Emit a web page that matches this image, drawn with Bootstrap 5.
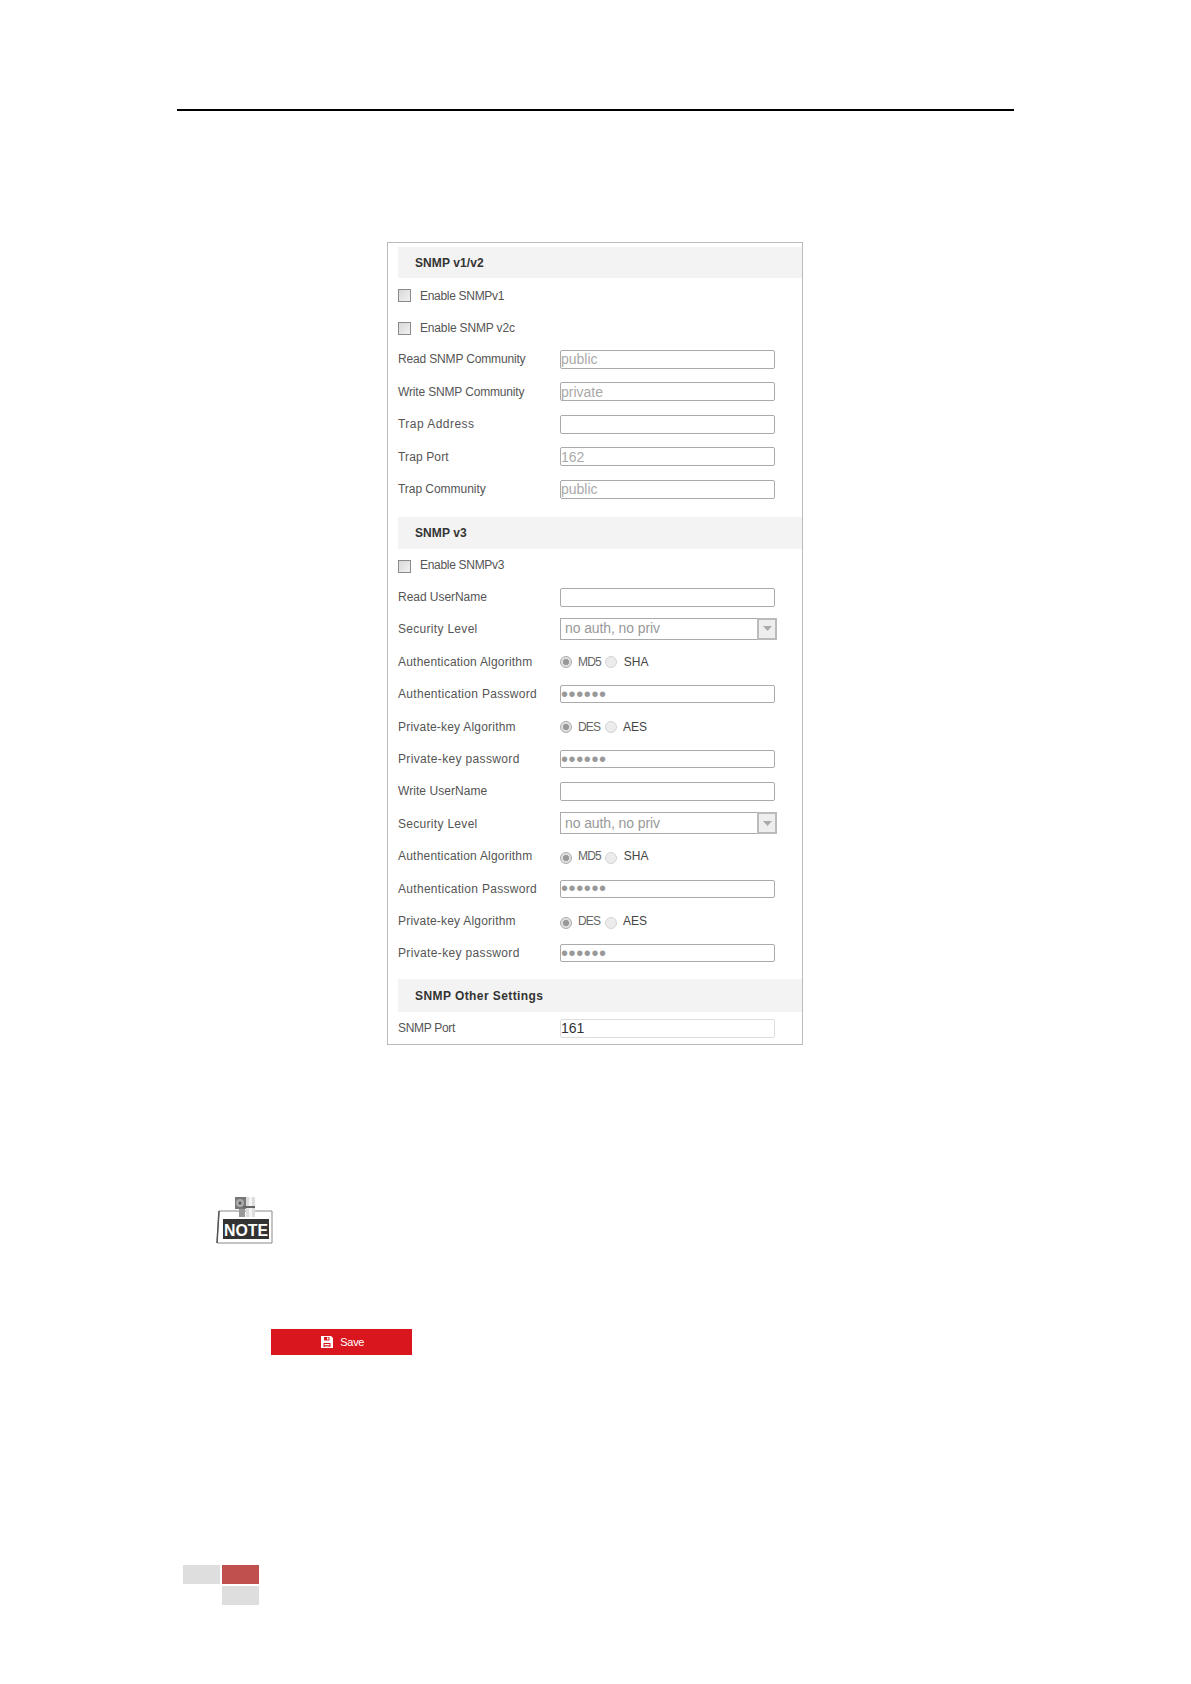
<!DOCTYPE html>
<html lang="en">
<head>
<meta charset="utf-8">
<title>SNMP Settings</title>
<link href="https://cdn.jsdelivr.net/npm/bootstrap@5.3.0/dist/css/bootstrap.min.css" rel="stylesheet">
<style>
body{background:#fff;font-family:"Liberation Sans",Arial,sans-serif;color:#555}
.sheet{width:1191px;height:1684px;padding-top:109px;overflow:hidden}
.top-rule{width:837px;height:2px;margin-left:177px;background:#000}
.snmp-panel{width:416px;height:803px;margin:131px 0 0 387px;padding:4px 0 0 10px;border:1px solid #bbb}
.sec-head{height:32px;padding-left:17px;background:#f3f3f3;color:#333;font-size:12px;font-weight:700;line-height:33px}
.sec-first{height:31px;letter-spacing:.1px}
.sec-mid{margin-top:11px;letter-spacing:.1px}
.sec-last{margin-top:9.500px;height:33px;line-height:34px;letter-spacing:.42px}
.cfg-row{height:32.400px;font-size:12px;color:#555}
.cfg-top .cfg-row{height:32.500px}
.cfg-top .cfg-enable{padding-top:3px}
.sp-a{letter-spacing:-.3px}
.sp-b{letter-spacing:-.16px}
.sp-c{letter-spacing:-.04px}
.sp-d{letter-spacing:.05px}
.sp-e{letter-spacing:.13px}
.sp-f{letter-spacing:.21px}
.sp-g{letter-spacing:.3px}
.sp-h{letter-spacing:.35px}
.sp-i{letter-spacing:.46px}
.cfg-label{width:162px;flex:none}
.cfg-input.form-control{width:215px;height:19px;min-height:0;padding:0;border:1px solid #aaa;border-radius:2px;font-size:14px;line-height:16px;letter-spacing:0;color:#333;box-shadow:none;background:#fff}
.cfg-input.form-control::placeholder{color:#aaa;opacity:1}
.cfg-input.cfg-pass{height:18px;font-size:20px;letter-spacing:.6px;color:#999;padding-left:0}
.cfg-input.cfg-soft{border-color:#ddd}
.cfg-select{width:217px;height:22px;margin-bottom:1px;border:1px solid #aaa;border-right:0;font-size:14px;letter-spacing:-.1px;color:#999;padding-left:4px}
.cfg-arrow{width:20px;height:22px;margin-left:auto;background:#eee;border:2px solid #bbb}
.cfg-check.form-check-input{width:13px;height:13px;margin:0 9px 0 0;border:1px solid #8a8a8a;border-radius:0;background:linear-gradient(135deg,#d8d8d8,#f1f1f1);flex:none}
.cfg-drop{transform:translateY(2px)}
.cfg-radio.form-check-input{width:12px;height:12px;margin:0;border:1px solid #d4d4d4;background:#ececec;flex:none}
.cfg-radio.form-check-input:checked{border-color:#aaa;background:radial-gradient(circle,#999 0,#999 2.800px,#e0e0e0 3.400px)}
.rad-one{margin-left:6px;letter-spacing:-.8px;color:#666}
.cfg-radio.form-check-input.rad-two{margin-left:4.300px}
.rad-three{margin-left:6.500px;letter-spacing:0;color:#444}
.note-art{margin:152px 0 0 216px;width:57px;height:47px;display:block}
.save-btn.btn{width:141px;height:26px;margin:85px 0 0 271px;padding:0 0 0 2px;border:0;border-radius:0;background:#d9161e;color:#fff;font-size:11px;letter-spacing:-.3px;font-weight:400;gap:7.500px}
.foot-blocks{display:grid;grid-template-columns:37px 37px;grid-template-rows:19px 19px;gap:2px;margin:210px 0 0 183px;width:76px}
.blk-grey{background:#dedede}
.blk-red{background:#c0504d}
</style>
</head>
<body>
<main class="sheet">
  <div class="top-rule"></div>

  <section class="snmp-panel">
    <div class="cfg-top">
      <div class="sec-head sec-first">SNMP v1/v2</div>
      <div class="cfg-row cfg-enable d-flex align-items-center"><input class="form-check-input cfg-check" type="checkbox" id="c1"><label class="sp-a" for="c1">Enable SNMPv1</label></div>
      <div class="cfg-row cfg-enable d-flex align-items-center"><input class="form-check-input cfg-check" type="checkbox" id="c2"><label class="sp-b" for="c2">Enable SNMP v2c</label></div>
      <div class="cfg-row d-flex align-items-center"><span class="cfg-label sp-b">Read SNMP Community</span><input class="form-control cfg-input" placeholder="public"></div>
      <div class="cfg-row d-flex align-items-center"><span class="cfg-label sp-b">Write SNMP Community</span><input class="form-control cfg-input" placeholder="private"></div>
      <div class="cfg-row d-flex align-items-center"><span class="cfg-label sp-i">Trap Address</span><input class="form-control cfg-input"></div>
      <div class="cfg-row d-flex align-items-center"><span class="cfg-label sp-e">Trap Port</span><input class="form-control cfg-input" placeholder="162"></div>
      <div class="cfg-row d-flex align-items-center"><span class="cfg-label sp-c">Trap Community</span><input class="form-control cfg-input" placeholder="public"></div>
    </div>

    <div class="sec-head sec-mid">SNMP v3</div>
    <div class="cfg-row d-flex align-items-center"><input class="form-check-input cfg-check cfg-drop" type="checkbox" id="c3"><label class="sp-a" for="c3">Enable SNMPv3</label></div>
    <div class="cfg-row d-flex align-items-center"><span class="cfg-label sp-c">Read UserName</span><input class="form-control cfg-input"></div>
    <div class="cfg-row d-flex align-items-center"><span class="cfg-label sp-g">Security Level</span>
      <div class="cfg-select d-flex align-items-center"><span>no auth, no priv</span><span class="cfg-arrow d-flex align-items-center justify-content-center"><svg width="9" height="5" viewBox="0 0 9 5"><path d="M0 0h9L4.500 5z" fill="#aaa"/></svg></span></div></div>
    <div class="cfg-row d-flex align-items-center"><span class="cfg-label sp-f">Authentication Algorithm</span>
      <div class="d-flex align-items-center"><input class="form-check-input cfg-radio" type="radio" name="a1" checked><span class="rad-one">MD5</span><input class="form-check-input cfg-radio rad-two" type="radio" name="a1"><span class="rad-three">SHA</span></div></div>
    <div class="cfg-row d-flex align-items-center"><span class="cfg-label sp-g">Authentication Password</span><input class="form-control cfg-input cfg-pass" type="password" value="123456"></div>
    <div class="cfg-row d-flex align-items-center"><span class="cfg-label sp-f">Private-key Algorithm</span>
      <div class="d-flex align-items-center"><input class="form-check-input cfg-radio" type="radio" name="p1" checked><span class="rad-one">DES</span><input class="form-check-input cfg-radio rad-two" type="radio" name="p1"><span class="rad-three">AES</span></div></div>
    <div class="cfg-row d-flex align-items-center"><span class="cfg-label sp-h">Private-key password</span><input class="form-control cfg-input cfg-pass" type="password" value="123456"></div>
    <div class="cfg-row d-flex align-items-center"><span class="cfg-label sp-d">Write UserName</span><input class="form-control cfg-input"></div>
    <div class="cfg-row d-flex align-items-center"><span class="cfg-label sp-g">Security Level</span>
      <div class="cfg-select d-flex align-items-center"><span>no auth, no priv</span><span class="cfg-arrow d-flex align-items-center justify-content-center"><svg width="9" height="5" viewBox="0 0 9 5"><path d="M0 0h9L4.500 5z" fill="#aaa"/></svg></span></div></div>
    <div class="cfg-row d-flex align-items-center"><span class="cfg-label sp-f">Authentication Algorithm</span>
      <div class="d-flex align-items-center"><input class="form-check-input cfg-radio cfg-drop" type="radio" name="a2" checked><span class="rad-one">MD5</span><input class="form-check-input cfg-radio rad-two cfg-drop" type="radio" name="a2"><span class="rad-three">SHA</span></div></div>
    <div class="cfg-row d-flex align-items-center"><span class="cfg-label sp-g">Authentication Password</span><input class="form-control cfg-input cfg-pass" type="password" value="123456"></div>
    <div class="cfg-row d-flex align-items-center"><span class="cfg-label sp-f">Private-key Algorithm</span>
      <div class="d-flex align-items-center"><input class="form-check-input cfg-radio cfg-drop" type="radio" name="p2" checked><span class="rad-one">DES</span><input class="form-check-input cfg-radio rad-two cfg-drop" type="radio" name="p2"><span class="rad-three">AES</span></div></div>
    <div class="cfg-row d-flex align-items-center"><span class="cfg-label sp-h">Private-key password</span><input class="form-control cfg-input cfg-pass" type="password" value="123456"></div>

    <div class="sec-head sec-last">SNMP Other Settings</div>
    <div class="cfg-row d-flex align-items-center"><span class="cfg-label sp-a">SNMP Port</span><input class="form-control cfg-input cfg-soft" value="161"></div>
  </section>

  <svg class="note-art" viewBox="0 0 57 47" role="img" aria-label="Note">
    <path d="M3 14H56V46H1z" fill="#fff" stroke="#8a8a8a" stroke-width="1"/>
    <path d="M1 46 3 14" stroke="#555" stroke-width="1.500"/>
    <rect x="7" y="22" width="46" height="20" fill="#333"/>
    <rect x="19" y="0" width="11" height="12" fill="#777"/>
    <circle cx="24" cy="6" r="4" fill="#aaa"/>
    <circle cx="24" cy="6" r="1.500" fill="#555"/>
    <rect x="23" y="12" width="6" height="8" fill="#999"/>
    <rect x="30" y="0" width="9" height="20" fill="#ddd"/>
    <rect x="33" y="0" width="3" height="20" fill="#f4f4f4"/>
    <rect x="27" y="9" width="12" height="2" fill="#666"/>
    <text x="8" y="38.500" fill="#fff" font-family="Liberation Sans,Arial,sans-serif" font-size="17" font-weight="700" textLength="44" lengthAdjust="spacingAndGlyphs">NOTE</text>
  </svg>

  <button class="btn save-btn d-flex align-items-center justify-content-center" type="button">
    <svg width="12" height="12" viewBox="0 0 12 12"><path fill="#fff" fill-rule="evenodd" d="M0 0h10l2 2v10H0zM3 1v3.500h5.500V1zM2.500 7v4h7V7zM3.500 8h5v1h-5zM3.500 9.800h5v.8h-5z"/><rect x="6" y="1.500" width="1.500" height="2" fill="#fff"/></svg>
    <span>Save</span>
  </button>

  <div class="foot-blocks">
    <div class="blk-grey"></div><div class="blk-red"></div>
    <div></div><div class="blk-grey"></div>
  </div>
</main>
<script src="https://cdn.jsdelivr.net/npm/bootstrap@5.3.0/dist/js/bootstrap.bundle.min.js"></script>
</body>
</html>
